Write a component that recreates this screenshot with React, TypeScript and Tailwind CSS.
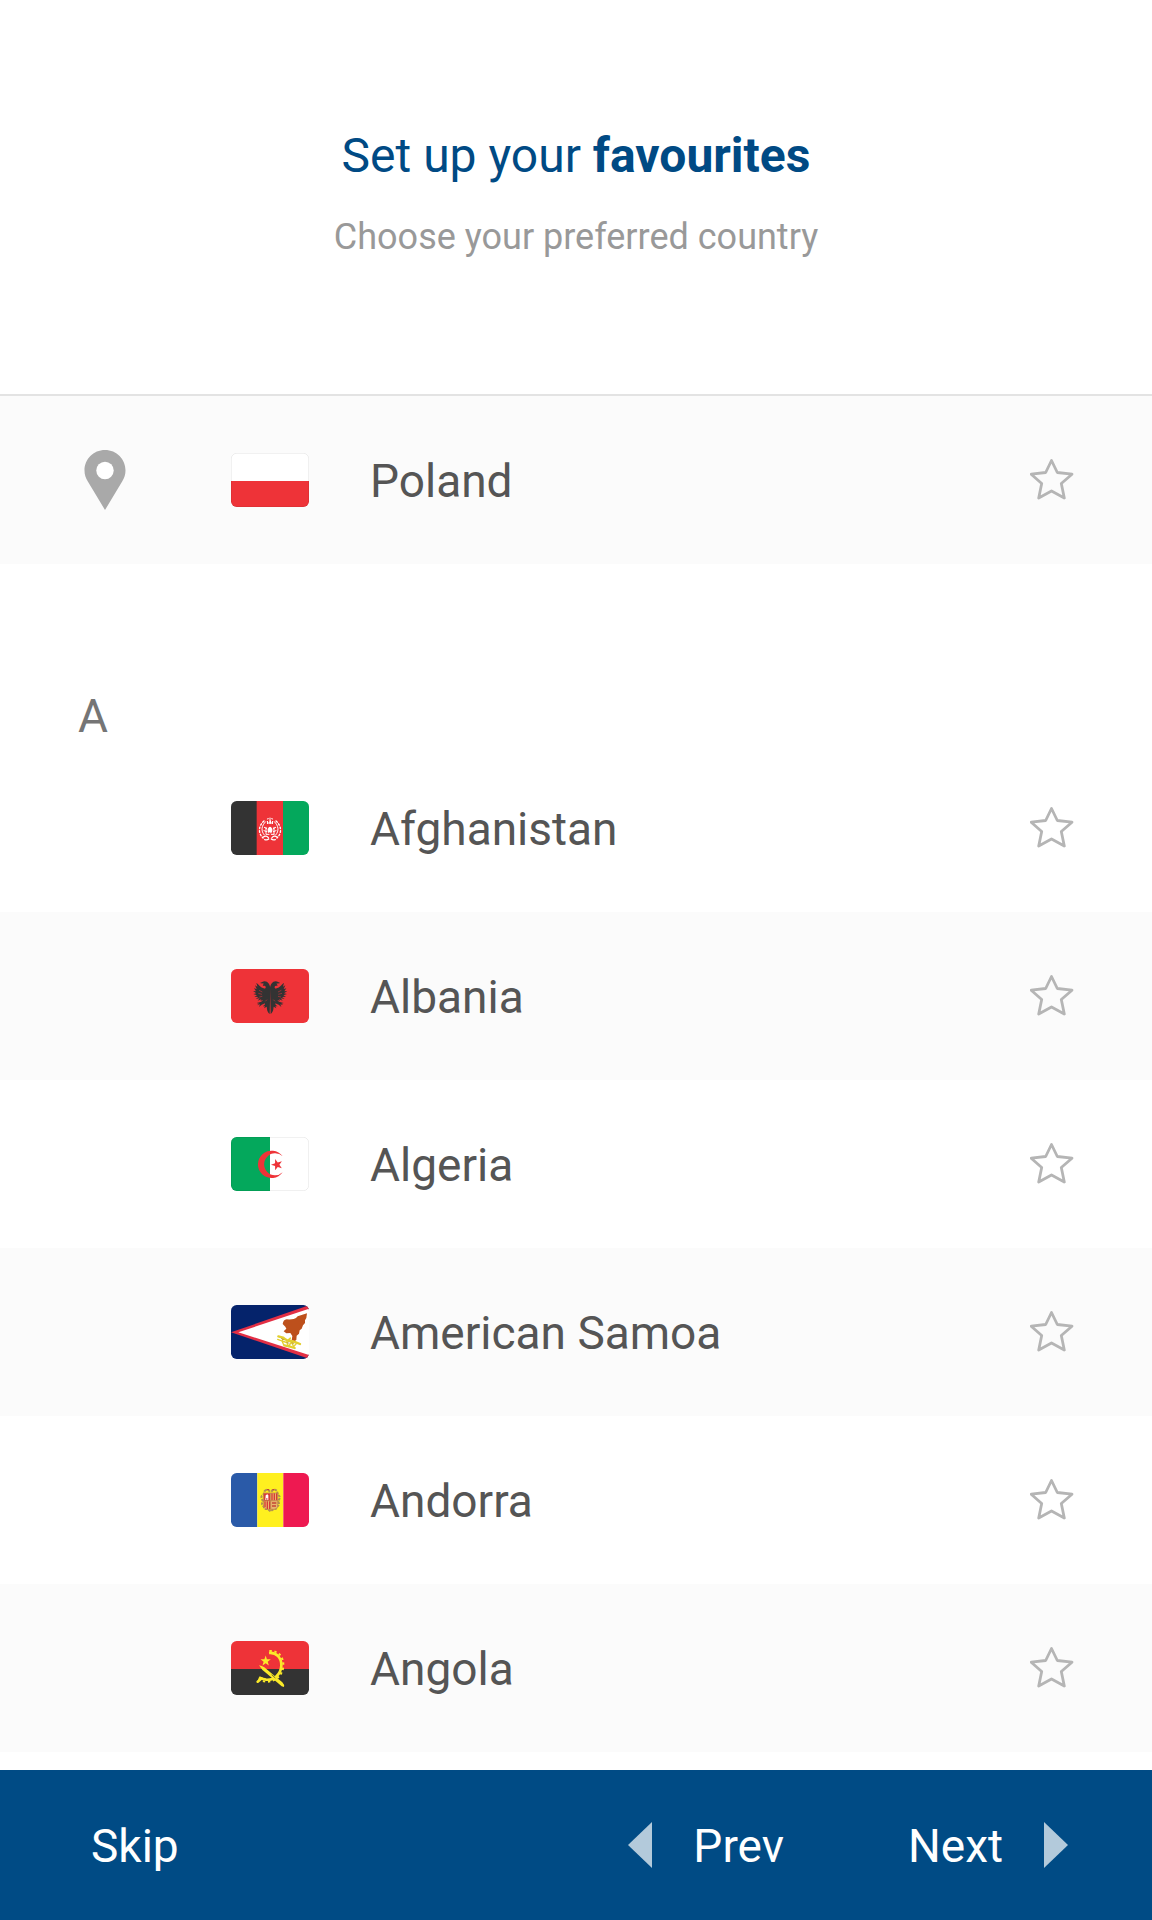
import { useState, type ReactNode } from "react";

const STAR = "M0-18 4.2-5.8 17.1-5.6 6.8 2.2 10.6 14.6 0 7.2-10.6 14.6-6.8 2.2-17.1-5.6-4.2-5.8Z";

function Flag({ id, outlined, children }: { id: string; outlined?: boolean; children: ReactNode }) {
  return (
    <svg viewBox="0 0 234 162" className="h-[54px] w-[78px] shrink-0" aria-hidden="true">
      <clipPath id={id}>
        <rect width="234" height="162" rx="17" />
      </clipPath>
      <g clipPath={`url(#${id})`}>{children}</g>
      {outlined && (
        <rect x="1" y="1" width="232" height="160" rx="16" fill="none" stroke="#000" strokeOpacity="0.07" strokeWidth="3" />
      )}
    </svg>
  );
}

function PolandFlag() {
  return (
    <Flag id="flag-pl" outlined>
      <path fill="#fff" d="M0 0h234v84H0z" />
      <path fill="#ee3338" d="M0 84h234v78H0z" />
    </Flag>
  );
}

function AfghanistanFlag() {
  return (
    <Flag id="flag-af">
      <path fill="#333" d="M0 0h78v162H0z" />
      <path fill="#ee3338" d="M77 0h79v162H77z" />
      <path fill="#04a85c" d="M156 0h78v162h-78z" />
      <g fill="none" stroke="#fff" strokeLinecap="round">
        <path strokeWidth="4" strokeDasharray="5 6" d="M99 60c-17 14-18 37-3 51M135 60c17 14 18 37 3 51" />
        <path strokeWidth="3" d="M104 62c-13 12-15 28-4 40M130 62c13 12 15 28 4 40M109 54l3-1m5-2v5m5-3 3 1" />
        <path strokeWidth="3" d="M105 99V79m24 20V79m-20-13h16M99 89l8 3m20 0 8-3M100 79l7 4m27-4-7 4M106 100h8m7 0h8" />
        <path strokeWidth="4" d="M97 108q9-6 15 2m26-2q-9-6-15 2M101 116q8 2 12-2m20 2q-8 2-12-2" />
      </g>
      <path fill="#fff" d="M110 84q7-14 14 0v6l-4 8-3-5-4 3-3-3zM115 58h5v10h-5zM108 60h3v9h-3zm15 0h3v9h-3z" />
    </Flag>
  );
}

function AlbaniaFlag() {
  const half =
    "M118 56c-2-9-7-19-17-19-6 0-9 4-14 5 5 1 8 2 12 2-3 2-4 4-3 7 4-2 7-1 8 2 1 4-2 7-6 5-9-3-15-11-22-17l3 12-7-4 5 11-8-2 6 9-9-1 10 7-9 2 11 4-8 4 12 1-8 6 12-2-6 7 11-4-3 5 8-3c-3 7-11 7-19 9l7 2-6 5 9-3-3 8 8-7c4-1 7-3 10-4l-1 5-6 4 7 0-3 6 8-5 1 8c1 6 3 10 8 14z";
  return (
    <Flag id="flag-al">
      <path fill="#ee3338" d="M0 0h234v162H0z" />
      <path fill="#333" d={half} />
      <path fill="#333" transform="translate(235 0) scale(-1 1)" d={half} />
      <path stroke="#ee3338" strokeWidth="1.5" fill="none" d="M84 64l10 5m-12 4 11 3m-8 8 9-2M151 64l-10 5m12 4-11 3m8 8-9-2M103 97l5-5m24 5-5-5" />
    </Flag>
  );
}

function AlgeriaFlag() {
  return (
    <Flag id="flag-dz" outlined>
      <path fill="#04a85c" d="M0 0h117v162H0z" />
      <path fill="#fff" d="M117 0h117v162H117z" />
      <path fill="#ee3338" d="M155 58a41 41 0 1 0 0 48 33 33 0 1 1 0-48z" />
      <path fill="#ee3338" transform="translate(138 83) rotate(-90)" d={STAR} />
    </Flag>
  );
}

function AmericanSamoaFlag() {
  return (
    <Flag id="flag-as">
      <path fill="#05236b" d="M0 0h234v162H0z" />
      <path fill="#e32f45" d="M0 82 234 1v160z" />
      <path fill="#fff" d="M22 82 234 11v139z" />
      <path
        fill="#bd501c"
        d="M155 57q2-13 12-14 12 1 21-1 8-1 12-8l28-9-2 14-4 7 0 8-6 7-4 10-6 5-2 10-7 6-1 13-6 4-8-3 2-13-6-9-12 1-8-6 8-8-3-6z"
      />
      <g fill="none" stroke="#e3cf2f" strokeLinecap="round" strokeLinejoin="round">
        <path strokeWidth="7" d="M142 94l14 4 14 9 17 2 20 8M160 121l15 3 16 5" />
        <path strokeWidth="4" d="M140 103l13 5 5 11m0-22-5 11 15 5 5 12 8-14 7 14 9-10m-19-14-6 8 22 4M178 99l-10 9" />
      </g>
      <path stroke="#a8802a" strokeWidth="2" fill="none" d="M150 100l10 5m7 7 8 3m7-2 8 4" />
    </Flag>
  );
}

function AndorraFlag() {
  return (
    <Flag id="flag-ad">
      <path fill="#2a5aa8" d="M0 0h79v162H0z" />
      <path fill="#fff01f" d="M79 0h78v162H79z" />
      <path fill="#ee1951" d="M157 0h77v162h-77z" />
      <path
        fill="none"
        stroke="#b38f52"
        strokeWidth="6"
        strokeDasharray="8 3"
        d="M101 54q7-8 14 0 4-4 8 0 8-8 15 0l3 12q8 4 4 12l-4 7q7 9-2 15-2 10-11 8l-9 7-9-7q-10 2-12-8-9-6-2-15l-4-8q-3-9 5-11z"
      />
      <path fill="#e9b66c" d="M98 60h42v42q-4 7-12 7h-18q-8 0-12-7z" />
      <path fill="#d83b36" d="M98 61h19v22H98z" />
      <path fill="#fff" d="M104 67l5-3 3 3v14h-3v-6h-3v6h-3z" />
      <path fill="none" stroke="#d83b36" strokeWidth="4" d="M123 61v21m7-21v21m7-21v21M102 85v18m7-18v23m7-23v23" />
      <path fill="none" stroke="#c34735" strokeWidth="4" d="M123 90h13m-13 9h12M108 50h6m10 0h6" />
      <path stroke="#b87a45" strokeWidth="2" fill="none" d="M98 60h42v42q-4 7-12 7h-18q-8 0-12-7zM98 83h42M119 60v49" />
    </Flag>
  );
}

function AngolaFlag() {
  return (
    <Flag id="flag-ao">
      <path fill="#ee3338" d="M0 0h234v84H0z" />
      <path fill="#333" d="M0 84h234v78H0z" />
      <path fill="none" stroke="#fbea29" strokeWidth="8" d="M114 36c22-2 38 14 37 38-1 26-22 44-46 42-8-1-15-3-21-7" />
      <path
        fill="none"
        stroke="#fbea29"
        strokeWidth="6"
        strokeDasharray="7 8"
        d="M115 30c26-2 43 17 42 44-1 29-25 50-53 48-9-1-16-4-22-8"
      />
      <path fill="#fbea29" transform="translate(104 60) scale(.9)" d={STAR} />
      <path fill="#fbea29" d="M84 73q9 1 16 6l24 20 30 25q7 7 5 14l-7-2L108 98Q92 88 84 73z" />
      <path fill="none" stroke="#333" strokeWidth="2" d="M122 101l11 10" />
      <path stroke="#fbea29" strokeWidth="8" strokeLinecap="round" d="M80 122l12-10" />
    </Flag>
  );
}

function PinIcon() {
  return (
    <svg viewBox="0 0 42 60" className="h-[60px] w-[42px]" role="img" aria-label="Current location">
      <path
        fill="#a9a9a9"
        fillRule="evenodd"
        d="M21 0C9.400 0 .5 9.200.5 20.500c0 4 1.200 7.500 3.200 10.700L21 60l17.300-28.800c2-3.200 3.200-6.700 3.200-10.700C41.500 9.200 32.600 0 21 0Z"
      />
      <circle cx="21" cy="20.500" r="8.700" fill="#fff" />
    </svg>
  );
}

function FavouriteButton({ country }: { country: string }) {
  const [active, setActive] = useState(false);
  return (
    <button
      type="button"
      aria-pressed={active}
      aria-label={`Add ${country} to favourites`}
      onClick={() => setActive(!active)}
      className="ml-auto shrink-0 cursor-pointer"
    >
      <svg viewBox="0 0 44 44" className="size-11" aria-hidden="true">
        <path
          d="M21.500 2.500 27.300 14.500 42 16.200 31.300 25.500 34.300 40 21.500 33 8.700 40 11.700 25.500 1.200 16.200 15.700 14.500Z"
          fill={active ? "#b5b5b5" : "none"}
          stroke="#b5b5b5"
          strokeWidth="2.800"
          strokeLinejoin="round"
        />
      </svg>
    </button>
  );
}

function CountryRow({ name, flag, located, shaded }: { name: string; flag: ReactNode; located?: boolean; shaded?: boolean }) {
  return (
    <li className={`flex h-[168px] items-center pr-[78px] pl-[78px] ${shaded ? "bg-[#fbfbfb]" : "bg-white"}`}>
      <span className="mr-[99px] flex w-[54px] shrink-0 justify-center">{located && <PinIcon />}</span>
      {flag}
      <span className="ml-[61px] pt-0.5 text-[46px] leading-14 text-[#555]">{name}</span>
      <FavouriteButton country={name} />
    </li>
  );
}

const countries = [
  { name: "Afghanistan", flag: <AfghanistanFlag /> },
  { name: "Albania", flag: <AlbaniaFlag /> },
  { name: "Algeria", flag: <AlgeriaFlag /> },
  { name: "American Samoa", flag: <AmericanSamoaFlag /> },
  { name: "Andorra", flag: <AndorraFlag /> },
  { name: "Angola", flag: <AngolaFlag /> },
];

export default function App() {
  return (
    <div className="flex min-h-screen flex-col bg-white font-['Roboto',sans-serif]">
      <header className="border-b-2 border-[#e3e3e3] px-8 pt-32 pb-[135px] text-center">
        <h1 className="text-[48px] leading-14 text-[#004a84]">
          Set up your <strong className="font-bold">favourites</strong>
        </h1>
        <p className="mt-[31px] text-[36px] leading-11 text-[#999]">Choose your preferred country</p>
      </header>

      <main>
        <ul>
          <CountryRow name="Poland" flag={<PolandFlag />} located shaded />
        </ul>
        <h2 className="pt-[124px] pl-[78px] text-[46px] leading-14 text-[#757575]">A</h2>
        <ul>
          {countries.map((country, index) => (
            <CountryRow key={country.name} name={country.name} flag={country.flag} shaded={index % 2 === 1} />
          ))}
        </ul>
      </main>

      <footer className="mt-auto flex h-[150px] items-center bg-[#004b85] pr-[84px] pl-[91px] text-[46px] leading-14 text-white">
        <button type="button" className="cursor-pointer pt-0.5">
          Skip
        </button>
        <nav className="ml-auto flex items-center gap-[124px]" aria-label="Setup steps">
          <button type="button" className="flex cursor-pointer items-center gap-[41px]">
            <svg viewBox="0 0 24 46" className="h-[46px] w-6" aria-hidden="true">
              <path d="M24 0v46L0 23z" fill="#b3cadb" />
            </svg>
            <span className="pt-0.5">Prev</span>
          </button>
          <button type="button" className="flex cursor-pointer items-center gap-[41px]">
            <span className="pt-0.5">Next</span>
            <svg viewBox="0 0 24 46" className="h-[46px] w-6" aria-hidden="true">
              <path d="M0 0v46l24-23z" fill="#b3cadb" />
            </svg>
          </button>
        </nav>
      </footer>
    </div>
  );
}
